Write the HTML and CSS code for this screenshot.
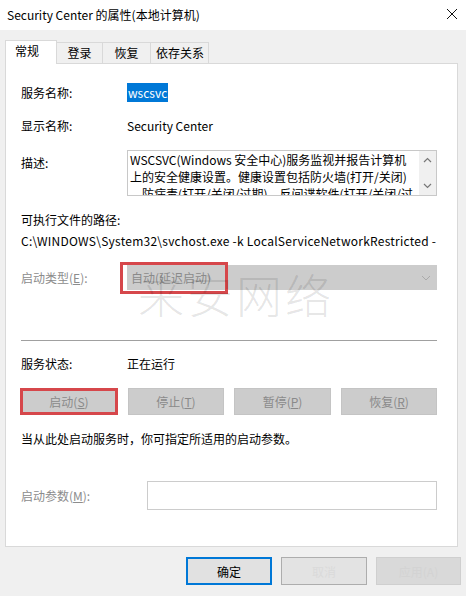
FILE: index.html
```html
<!DOCTYPE html>
<html lang="zh-CN">
<head>
    <meta charset="UTF-8">
    <title>Security Center 的属性(本地计算机)</title>
    <link rel="stylesheet" href="styles.css">
</head>
<body>
<div class="titlebar">
    <span class="title">Security Center 的属性(本地计算机)</span>
    <span class="close">
        <svg width="12" height="12" viewBox="0 0 12 12"><path d="M1 1 L11 11 M11 1 L1 11" stroke="#111" stroke-width="1"/></svg>
    </span>
</div>

<div class="dialog">
    <div class="tabs">
        <div class="tab active">常规</div>
        <div class="tab">登录</div>
        <div class="tab">恢复</div>
        <div class="tab">依存关系</div>
    </div>

    <div class="panel">
        <div class="row r-name">
            <div class="label">服务名称:</div>
            <div class="value"><span class="selected-text">wscsvc</span></div>
        </div>
        <div class="row r-display">
            <div class="label">显示名称:</div>
            <div class="value">Security Center</div>
        </div>
        <div class="row r-desc">
            <div class="label desc-label">描述:</div>
            <div class="desc-box">
                <div class="desc-text">
                    WSCSVC(Windows 安全中心)服务监视并报告计算机<br>
                    上的安全健康设置。健康设置包括防火墙(打开/关闭)<br>
                    、防病毒(打开/关闭/过期)、反间谍软件(打开/关闭/过
                </div>
                <div class="scrollbar">
                    <svg width="9" height="6" viewBox="0 0 9 6"><path d="M1 5 L4.5 1.5 L8 5" fill="none" stroke="#777" stroke-width="1.2"/></svg>
                    <svg width="9" height="6" viewBox="0 0 9 6"><path d="M1 1 L4.5 4.5 L8 1" fill="none" stroke="#777" stroke-width="1.2"/></svg>
                </div>
            </div>
        </div>
        <div class="path-label">可执行文件的路径:</div>
        <div class="path">C:\WINDOWS\System32\svchost.exe -k LocalServiceNetworkRestricted -</div>

        <div class="row r-type">
            <div class="label disabled">启动类型(<u>E</u>):</div>
            <div class="select">
                <span>自动(延迟启动)</span>
                <svg width="10" height="6" viewBox="0 0 10 6"><path d="M1 1 L5 5 L9 1" fill="none" stroke="#aaa" stroke-width="1"/></svg>
            </div>
            <div class="mark mark-select"></div>
        </div>

        <div class="separator"></div>

        <div class="row r-status">
            <div class="label">服务状态:</div>
            <div class="value">正在运行</div>
        </div>
        <div class="svc-buttons">
            <div class="btn off marked">启动(<u>S</u>)</div>
            <div class="btn off">停止(<u>T</u>)</div>
            <div class="btn off">暂停(<u>P</u>)</div>
            <div class="btn off">恢复(<u>R</u>)</div>
        </div>
        <div class="note">当从此处启动服务时，你可指定所适用的启动参数。</div>

        <div class="row r-param">
            <div class="label param-label disabled">启动参数(<u>M</u>):</div>
            <div class="param-input"></div>
        </div>

        <div class="watermark">来安网络</div>
    </div>

    <div class="footer">
        <div class="fbtn primary">确定</div>
        <div class="fbtn faded">取消</div>
        <div class="fbtn faded2">应用(A)</div>
    </div>
</div>
</body>
</html>
```

FILE: styles.css
```css
body {
    margin: 0;
    width: 466px;
    height: 596px;
    overflow: hidden;
    background: #f0f0f0;
    font-family: "Noto Sans CJK SC", "Microsoft YaHei", "Noto Sans", sans-serif;
    font-size: 12px;
    color: #000;
}

u {
    text-decoration: underline;
    text-underline-offset: 1px;
}

.titlebar {
    height: 30px;
    background: #fff;
    display: flex;
    align-items: center;
    justify-content: space-between;
    padding: 0 8px 0 7px;
}

.title {
    font-size: 12px;
    line-height: 16px;
}

.close {
    display: flex;
    margin-top: -2px;
}

.dialog {
    padding: 10px 0 0 5px;
}

.tabs {
    display: flex;
    align-items: flex-end;
    height: 23px;
    position: relative;
    z-index: 1;
}

.tab {
    height: 21px;
    line-height: 20px;
    box-sizing: border-box;
    padding: 0 5px;
    border: 1px solid #d9d9d9;
    border-bottom: none;
    margin-right: -1px;
    background: #f0f0f0;
    white-space: nowrap;
    text-align: center;
}

.tab:nth-child(2) { width: 47px; }
.tab:nth-child(3) { width: 49px; }
.tab:nth-child(4) { width: 59px; }

.tab.active {
    height: 24px;
    width: 52px;
    background: #fff;
    line-height: 20px;
    margin-bottom: -1px;
    padding-left: 9px;
    text-align: left;
}

.panel {
    position: relative;
    width: 453px;
    height: 484px;
    box-sizing: border-box;
    background: #fff;
    border: 1px solid #d9d9d9;
    padding: 0 20px 0 15px;
}

.row {
    display: flex;
    align-items: center;
    position: relative;
}

.label {
    width: 106px;
    flex: none;
    line-height: 16px;
}

.value {
    line-height: 16px;
}

.disabled {
    color: #8c8c8c;
}

.r-name { margin-top: 21px; }
.r-display { margin-top: 17px; }

.selected-text {
    background: #0078d7;
    color: #fff;
    padding: 1px 1px;
}

.r-desc {
    margin-top: 16px;
    align-items: flex-start;
}

.desc-label {
    margin-top: 5px;
}

.desc-box {
    width: 311px;
    height: 46px;
    box-sizing: border-box;
    border: 1px solid #c8c8c8;
    display: flex;
    overflow: hidden;
}

.desc-text {
    flex: 1;
    padding: 0 0 0 2px;
    line-height: 17px;
    white-space: nowrap;
    overflow: hidden;
}

.scrollbar {
    width: 17px;
    flex: none;
    background: #f0f0f0;
    display: flex;
    flex-direction: column;
    justify-content: space-between;
    align-items: center;
    padding: 6px 0 6px;
}

.path-label {
    margin-top: 16px;
    line-height: 16px;
}

.path {
    margin-top: 5px;
    line-height: 16px;
    white-space: nowrap;
    overflow: hidden;
    width: 418px;
    letter-spacing: 0.25px;
}

.r-type { margin-top: 16px; }

.select {
    width: 311px;
    height: 25px;
    box-sizing: border-box;
    background: #cccccc;
    color: #8a8a8a;
    display: flex;
    align-items: center;
    justify-content: space-between;
    padding: 0 6px 0 4px;
}

.mark {
    position: absolute;
    border: 3px solid #d6474b;
    box-sizing: border-box;
}

.mark-select {
    left: 99px;
    top: -3px;
    width: 108px;
    height: 32px;
}

.separator {
    margin-top: 50px;
    height: 1px;
    background: #a0a0a0;
    width: 416px;
}

.r-status { margin-top: 15px; }

.svc-buttons {
    margin-top: 16px;
    display: grid;
    grid-template-columns: 98px 96px 97px 96px;
    column-gap: 10px;
    margin-left: -1px;
}

.btn {
    height: 27px;
    box-sizing: border-box;
    display: flex;
    align-items: center;
    justify-content: center;
}

.btn.off {
    background: #cccccc;
    border: 1px solid #c4c4c4;
    color: #8a8a8a;
}

.btn.marked {
    border: 3px solid #d6474b;
}

.note {
    margin-top: 16px;
    line-height: 16px;
}

.r-param { margin-top: 34px; }

.param-label {
    width: 126px;
}

.param-input {
    width: 290px;
    height: 29px;
    box-sizing: border-box;
    border: 1px solid #cccccc;
}

.watermark {
    position: absolute;
    left: 132px;
    top: 196px;
    font-size: 46px;
    font-weight: 300;
    letter-spacing: 3px;
    color: rgba(0, 0, 0, 0.11);
    pointer-events: none;
}

.footer {
    display: flex;
    padding-left: 181px;
    margin-top: 10px;
}

.fbtn {
    height: 28px;
    box-sizing: border-box;
    display: flex;
    align-items: center;
    justify-content: center;
}

.fbtn.primary {
    width: 86px;
    border: 2px solid #0078d7;
    background: #e1e1e1;
}

.fbtn.faded {
    width: 86px;
    margin-left: 9px;
    border: 1px solid #adadad;
    background: #e3e3e3;
    color: #dadada;
}

.fbtn.faded2 {
    width: 85px;
    margin-left: 9px;
    border: 1px solid #cfcfcf;
    background: #d9d9d9;
    color: #d3d3d3;
}
```
